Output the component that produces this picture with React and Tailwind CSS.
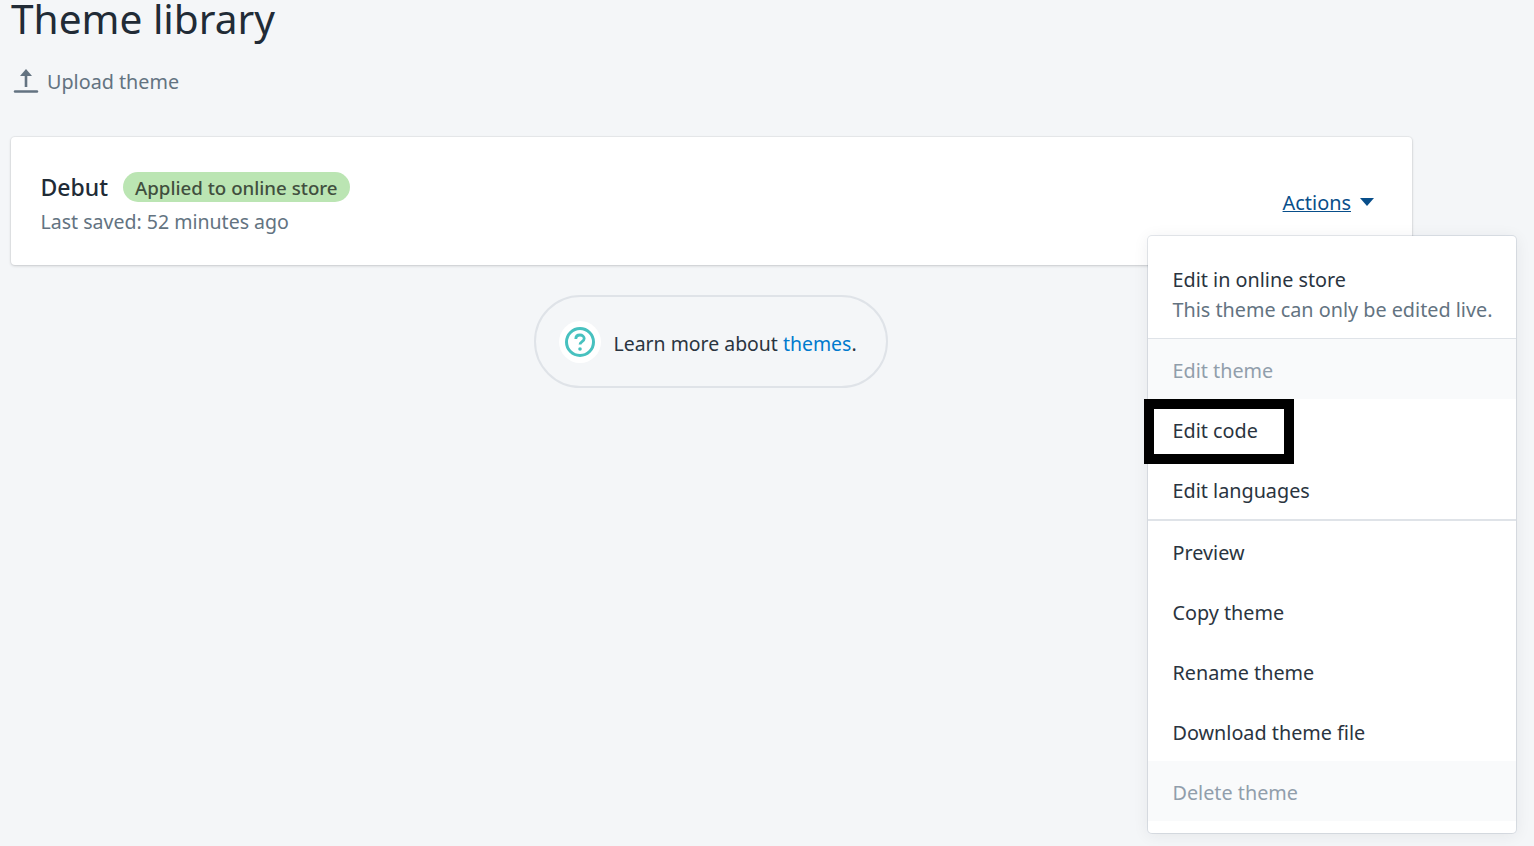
const font = "font-['Noto_Sans',sans-serif]";

function UploadIcon() {
  return (
    <svg width="26" height="26" viewBox="0 0 26 26" className="mt-[-3px] text-[#637381]">
      <path d="M2 23.500h22" stroke="currentColor" strokeWidth="2.400" strokeLinecap="round" />
      <path d="M13 19V4" stroke="currentColor" strokeWidth="2.600" />
      <path d="M13 1l6 7H7z" fill="currentColor" />
    </svg>
  );
}

function HelpIcon() {
  return (
    <svg width="32" height="32" viewBox="0 0 32 32" fill="none">
      <circle cx="16" cy="16" r="13.500" stroke="#47c1bf" strokeWidth="3" />
      <path
        d="M11.800 13c0-2.600 1.900-4 4.200-4s4.200 1.400 4.200 3.600c0 3.200-4.200 3-4.200 6"
        stroke="#47c1bf"
        strokeWidth="2.800"
      />
      <circle cx="16" cy="23" r="1.800" fill="#47c1bf" />
    </svg>
  );
}

function MenuItem({ children, disabled, boxed }) {
  return (
    <div
      className={
        "relative flex items-center h-[60px] pl-[24.500px] pt-[4px] text-[19.800px] " +
        (disabled ? "bg-[#f9fafb] text-[#919eab]" : "text-[#2a3440]")
      }
    >
      {children}
      {boxed && (
        <div className="absolute left-[-4px] top-0 w-[150px] h-[65px] border-[10px] border-black"></div>
      )}
    </div>
  );
}

function App() {
  return (
    <div className={"relative h-[846px] overflow-hidden bg-[#f4f6f8] " + font}>
      <div className="pl-[11px] w-[1412px]">
        <h1 className="mt-[-8px] h-[54px] text-[40.600px] leading-[54px] text-[#212b36]">
          Theme library
        </h1>
        <div className="flex items-center gap-[8px] mt-[22px] pl-[2px] h-[28px] text-[19.750px] text-[#637381]">
          <UploadIcon />
          <span>Upload theme</span>
        </div>
        <div className="flex justify-between mt-[41px] h-[128px] rounded-[4px] bg-white pl-[29.500px] pr-[38px] shadow-[0_0_0_1px_rgba(63,63,68,0.05),0_1px_3px_0_rgba(63,63,68,0.2)]">
          <div className="pt-[35px]">
            <div className="flex items-center h-[30px]">
              <span className="text-[23px] font-medium text-[#212b36]">Debut</span>
              <span className="ml-[15px] flex items-center h-[30px] px-[12px] pt-[2px] rounded-full bg-[#bbe5b3] text-[18.700px] font-medium text-[#414f3e]">
                Applied to online store
              </span>
            </div>
            <div className="mt-[5px] text-[19.550px] text-[#637381]">Last saved: 52 minutes ago</div>
          </div>
          <div className="flex items-center gap-[9px] h-fit mt-[51px] text-[19.900px] text-[#084e8a]">
            <span className="underline">Actions</span>
            <svg width="14" height="8" viewBox="0 0 14 8" className="mt-[-2px]">
              <path d="M0 0h14L7 8z" fill="currentColor" />
            </svg>
          </div>
        </div>
        <div className="flex justify-center mt-[30px] pr-[2px]">
          <div className="flex items-center h-[93px] w-[354px] pl-[23px] rounded-full border-2 border-[#dfe3e8] text-[19.450px] text-[#2a3440]">
            <div className="flex items-center justify-center w-[42px] h-[42px] rounded-full bg-white">
              <HelpIcon />
            </div>
            <span className="ml-[13px] pt-[4px]">
              Learn more about <span className="text-[#007ace]">themes</span>.
            </span>
          </div>
        </div>
      </div>

      <div className="absolute left-[1148px] top-[236px] w-[368px] h-[597px] rounded-[4px] bg-white shadow-[0_0_0_1px_rgba(6,44,82,0.1),0_2px_16px_rgba(33,43,54,0.08)]">
        <div className="h-[103px] pl-[24.500px] pt-[29px] border-b border-[#dfe3e8] text-[19.800px] leading-[30px]">
          <div className="text-[#2a3440]">Edit in online store</div>
          <div className="text-[#637381]">This theme can only be edited live.</div>
        </div>
        <MenuItem disabled>Edit theme</MenuItem>
        <MenuItem boxed>Edit code</MenuItem>
        <MenuItem>Edit languages</MenuItem>
        <div className="h-[2px] bg-[#dfe3e8]"></div>
        <MenuItem>Preview</MenuItem>
        <MenuItem>Copy theme</MenuItem>
        <MenuItem>Rename theme</MenuItem>
        <MenuItem>Download theme file</MenuItem>
        <MenuItem disabled>Delete theme</MenuItem>
      </div>
    </div>
  );
}

export default App;
